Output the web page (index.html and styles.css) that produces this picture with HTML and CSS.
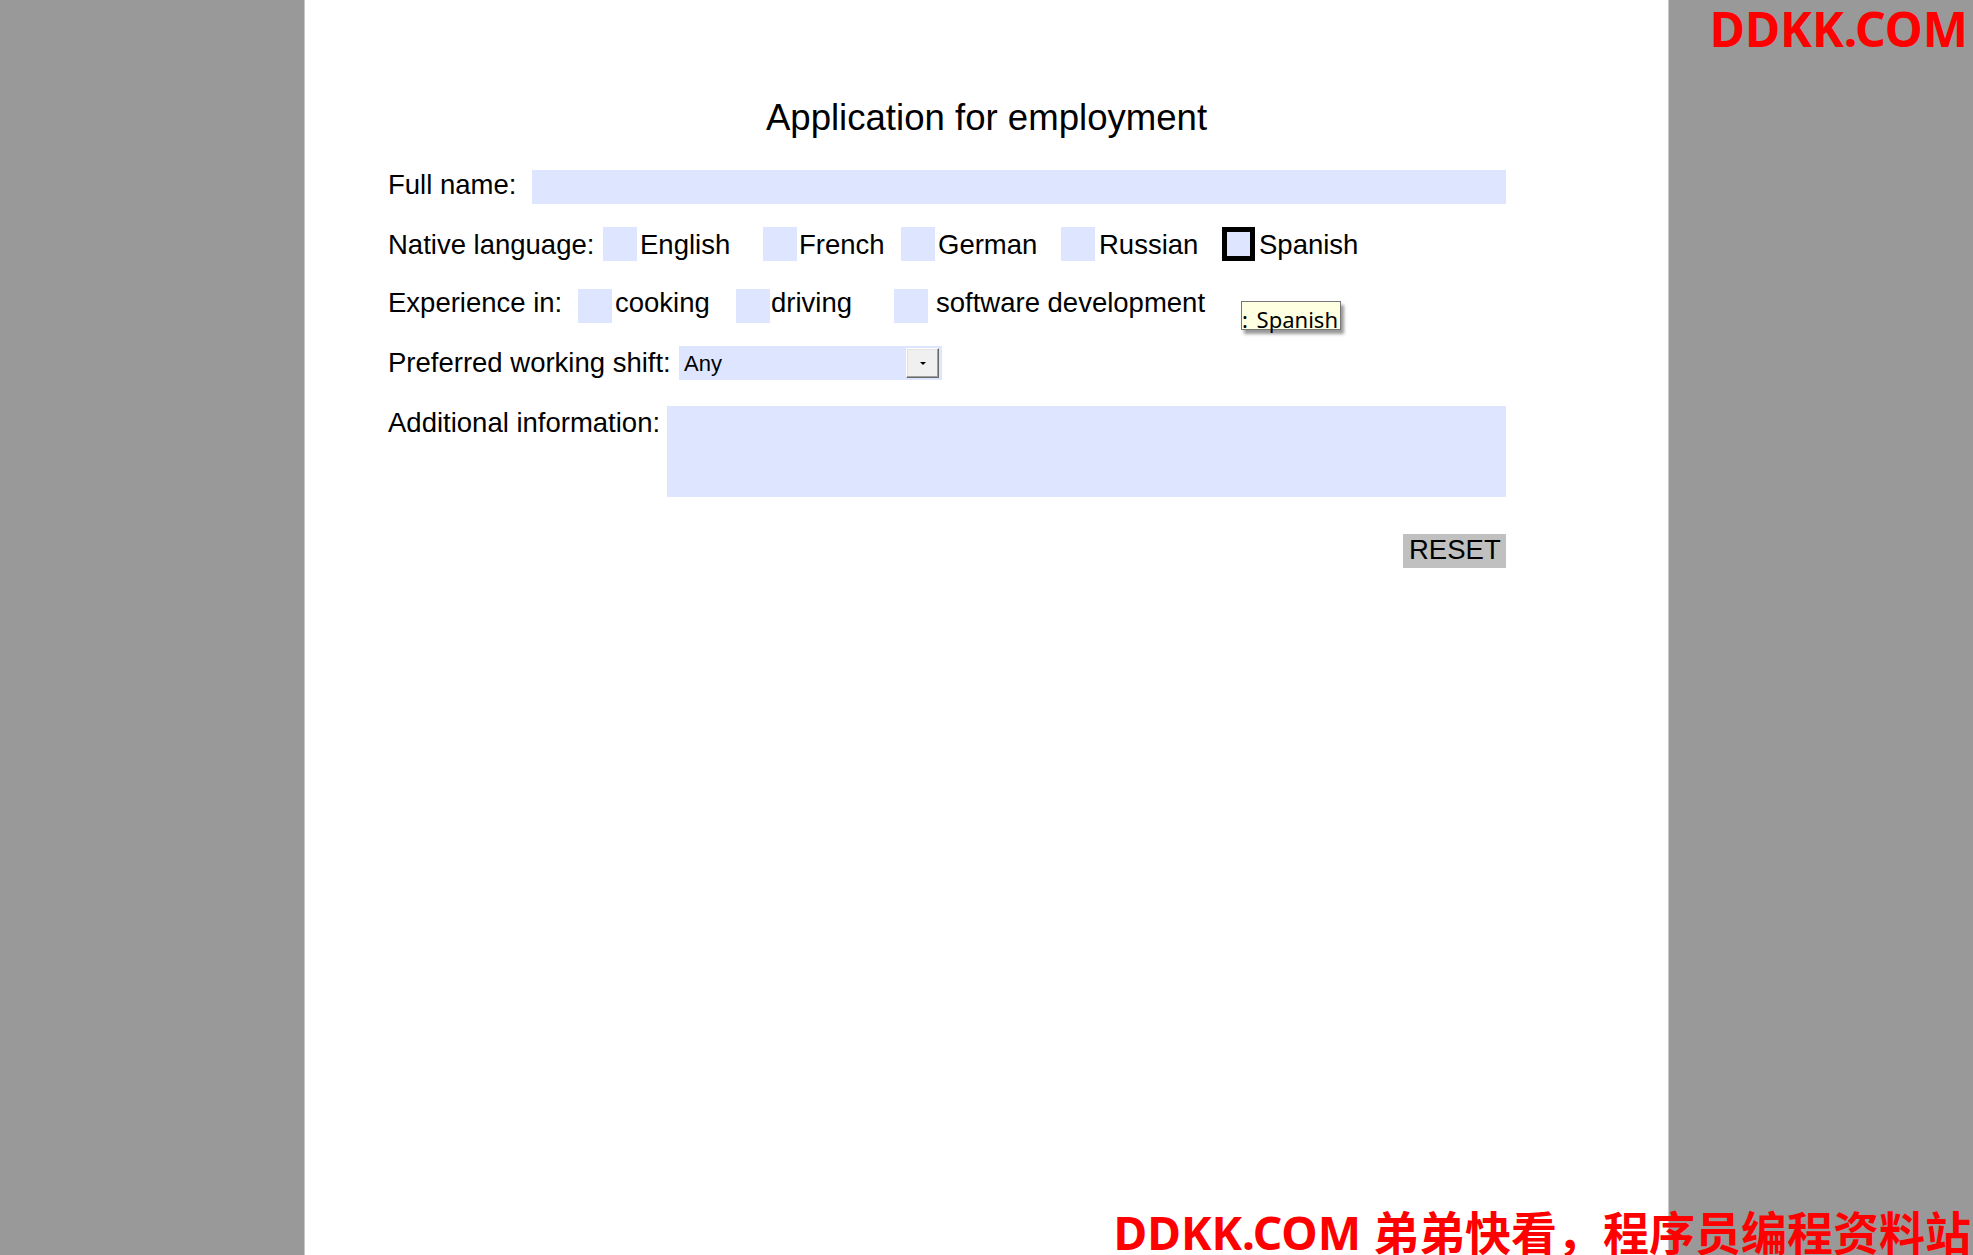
FILE: index.html
```html
<!DOCTYPE html>
<html lang="en">
<head>
<meta charset="utf-8">
<title>Application for employment</title>
<link rel="stylesheet" href="styles.css">
</head>
<body>
<div class="viewer">
  <div class="page">
    <h1 class="title">Application for employment</h1>
    <form class="form">
      <div class="row row-name">
        <span class="lbl lbl-name lh30">Full name:</span>
        <div class="field field-text"></div>
      </div>
      <div class="row row-lang">
        <span class="lbl lbl-lang lh36">Native language:</span>
        <div class="opt w160"><span class="box"></span><span class="txt g3 lh36">English</span></div>
        <div class="opt w138"><span class="box"></span><span class="txt g2 lh36">French</span></div>
        <div class="opt w160"><span class="box"></span><span class="txt g3 lh36">German</span></div>
        <div class="opt w161"><span class="box"></span><span class="txt g4 lh36">Russian</span></div>
        <div class="opt"><span class="box box-focus"></span><span class="txt g4 lh36">Spanish</span></div>
      </div>
      <div class="row row-exp">
        <span class="lbl lbl-exp lh28">Experience in:</span>
        <div class="opt w158"><span class="box"></span><span class="txt g3 lh28">cooking</span></div>
        <div class="opt w158"><span class="box"></span><span class="txt g1 lh28">driving</span></div>
        <div class="opt"><span class="box"></span><span class="txt g8 lh28">software development</span></div>
      </div>
      <div class="row row-shift">
        <span class="lbl lbl-shift lh34">Preferred working shift:</span>
        <div class="field select">
          <span class="select-value">Any</span>
          <span class="select-btn"><span class="arrow"></span></span>
        </div>
      </div>
      <div class="row row-info">
        <span class="lbl lbl-info lh33">Additional information:</span>
        <div class="field field-area"></div>
      </div>
      <div class="row row-reset">
        <span class="btn-reset">RESET</span>
      </div>
    </form>
  </div>
</div>
<div class="tooltip">: Spanish</div>
<div class="wm-top">DDKK.COM</div>
<div class="wm-bottom">DDKK.COM 弟弟快看，程序员编程资料站</div>
</body>
</html>
```

FILE: styles.css
```css
* {
  box-sizing: border-box;
}

html,
body {
  margin: 0;
  padding: 0;
}

body {
  background: #999999;
  font-family: "Liberation Sans", Arial, sans-serif;
  color: #000;
  height: 1255px;
  overflow: hidden;
}

.viewer {
  display: flex;
  height: 1255px;
}

.page {
  margin-left: 304px;
  width: 1365px;
  height: 1255px;
  flex: none;
  background: #fff;
  border-left: 1px solid #c8c8c8;
  border-right: 1px solid #c8c8c8;
  padding-top: 98px;
}

.title {
  margin: 0;
  font-size: 36.6px;
  line-height: 40px;
  font-weight: normal;
  text-align: center;
}

.form {
  margin: 32px 0 0 83px;
  width: 1118px;
  font-size: 27.5px;
  display: flex;
  flex-direction: column;
}

.row {
  display: flex;
  align-items: flex-start;
  height: 34px;
  flex: none;
}

.row-lang { margin-top: 23px; }
.row-exp { margin-top: 28px; }
.row-shift { margin-top: 23px; }
.row-info { margin-top: 26px; height: 91px; }
.row-reset { margin-top: 37px; justify-content: flex-end; }

.lbl {
  flex: none;
  white-space: nowrap;
}

.lbl-name { width: 144px; }
.lbl-lang { width: 215px; }
.lbl-exp { width: 190px; }
.lbl-shift { width: 291px; }
.lbl-info { width: 279px; }

.lh28 { line-height: 28px; }
.lh30 { line-height: 30px; }
.lh33 { line-height: 33px; }
.lh34 { line-height: 34px; }
.lh36 { line-height: 36px; }

.field {
  background: #dee5ff;
  flex: none;
}

.field-text {
  width: 974px;
  height: 34px;
}

.field-area {
  width: 839px;
  height: 91px;
}

.opt {
  display: flex;
  align-items: flex-start;
  flex: none;
  white-space: nowrap;
}

.w138 { width: 138px; }
.w158 { width: 158px; }
.w160 { width: 160px; }
.w161 { width: 161px; }

.box {
  display: block;
  width: 34px;
  height: 34px;
  background: #dee5ff;
  flex: none;
}

.box-focus {
  width: 33px;
  border: 5px solid #000;
}

.txt { margin-left: 2px; }
.g1 { margin-left: 1px; }
.g2 { margin-left: 2px; }
.g3 { margin-left: 3px; }
.g4 { margin-left: 4px; }
.g8 { margin-left: 8px; }

.select {
  width: 263px;
  height: 34px;
  display: flex;
  justify-content: space-between;
  align-items: flex-start;
  padding-left: 5px;
}

.select-value {
  font-size: 22px;
  line-height: 36px;
  height: 34px;
}

.select-btn {
  width: 33px;
  height: 30px;
  margin: 2px 3px 0 0;
  background: #f0f0f0;
  border: 1px solid;
  border-color: #ffffff #696969 #696969 #ffffff;
  box-shadow: inset -1px -1px 0 #a0a0a0, inset 1px 1px 0 #e3e3e3;
  display: flex;
  align-items: center;
  justify-content: center;
}

.arrow {
  width: 0;
  height: 0;
  border-left: 3px solid transparent;
  border-right: 3px solid transparent;
  border-top: 3px solid #000;
}

.btn-reset {
  width: 103px;
  height: 34px;
  background: #c0c0c0;
  line-height: 31px;
  padding-left: 6px;
  white-space: nowrap;
}

.tooltip {
  position: absolute;
  left: 1241px;
  top: 301px;
  width: 100px;
  height: 29px;
  background: #ffffe1;
  border: 1px solid #767676;
  box-shadow: 3px 4px 3px rgba(0, 0, 0, 0.4);
  font-family: "Noto Sans", "Open Sans", sans-serif;
  font-size: 22px;
  line-height: 35px;
  word-spacing: 3px;
  white-space: nowrap;
  color: #000;
}

.wm-top,
.wm-bottom {
  position: absolute;
  color: #ff0000;
  font-family: "Noto Sans", "Noto Sans CJK SC", sans-serif;
  font-weight: bold;
  white-space: nowrap;
}

.wm-top {
  right: 5px;
  top: 5px;
  font-size: 48px;
  line-height: 48px;
}

.wm-bottom {
  right: 2px;
  top: 1209px;
  font-size: 46px;
  line-height: 46px;
}
```
